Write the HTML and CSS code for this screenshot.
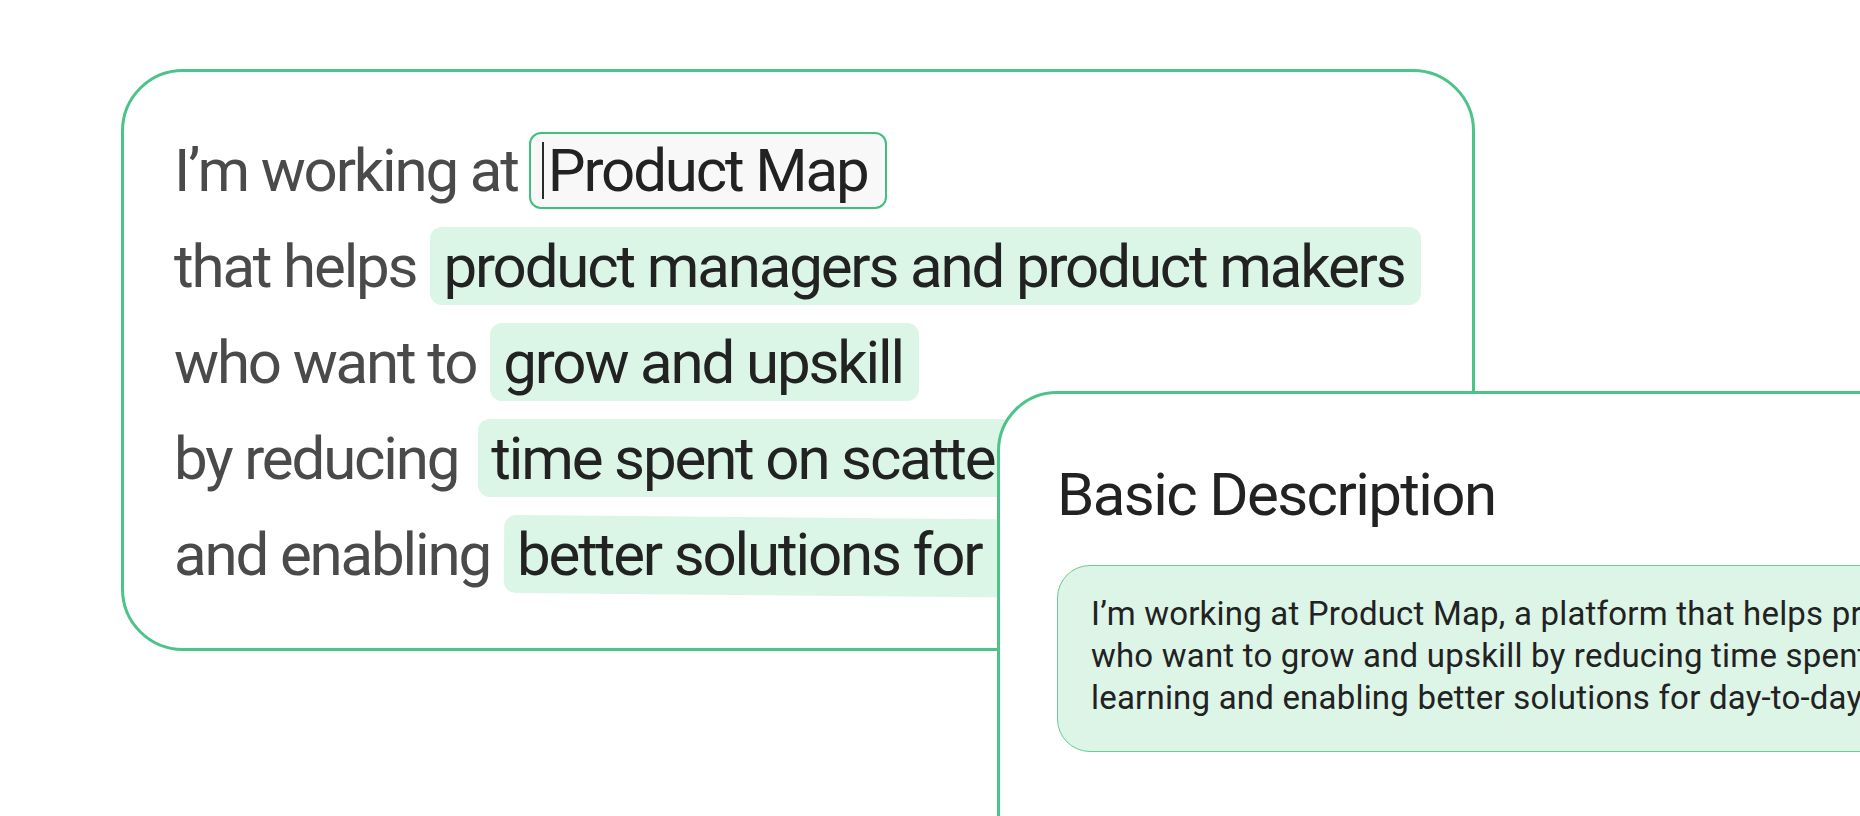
FILE: index.html
```html
<!DOCTYPE html>
<html>
<head>
    <title>Product Map - Describe your product</title>
    <link rel="stylesheet" href="styles.css">
</head>
<body>
    <div class="stage">
        <div class="builder">
            <div class="row">
                <span class="label">I’m working at</span>
                <span class="field"><span class="caret"></span>Product Map</span>
            </div>
            <div class="row">
                <span class="label">that helps</span>
                <span class="pill">product managers and product makers</span>
            </div>
            <div class="row">
                <span class="label">who want to</span>
                <span class="pill">grow and upskill</span>
            </div>
            <div class="row">
                <span class="label">by reducing</span>
                <span class="pill wide_gap">time spent on scattered learning</span>
            </div>
            <div class="row">
                <span class="label">and enabling</span>
                <span class="pill tilted">better solutions for day-to-day work</span>
            </div>
        </div>

        <div class="summary">
            <h2 class="summary_title">Basic Description</h2>
            <div class="summary_box">
                I’m working at Product Map, a platform that helps product managers and product makers<br>
                who want to grow and upskill by reducing time spent on scattered<br>
                learning and enabling better solutions for day-to-day challenges.
            </div>
        </div>
    </div>
</body>
</html>
```

FILE: styles.css
```css
body {
	margin: 0;
	background-color: #ffffff;
	font-family: Roboto, "Noto Sans", sans-serif;
	overflow: hidden;
}

.stage {
	position: relative;
	width: 1860px;
	height: 816px;
	overflow: hidden;
}

.builder {
	box-sizing: border-box;
	width: 1354px;
	height: 582px;
	margin: 69px 0 0 121px;
	padding: 59px 0 0 50px;
	border: 3px solid #4dc38a;
	border-radius: 62px;
	display: flex;
	flex-direction: column;
	gap: 18px;
}

.row {
	display: flex;
	align-items: center;
	gap: 14px;
	height: 78px;
	font-size: 60px;
	letter-spacing: -2.15px;
	white-space: nowrap;
}

.label {
	color: #4a4a4a;
}

.field {
	box-sizing: border-box;
	height: 77px;
	display: flex;
	align-items: center;
	margin-left: -3px;
	padding: 0 18px 0 11px;
	background-color: #f8f8f8;
	border: 2px solid #3fc07f;
	border-radius: 12px;
	color: #222222;
}

.caret {
	width: 2px;
	height: 57px;
	margin-right: 4px;
	background-color: #2a2a2a;
}

.pill {
	position: relative;
	isolation: isolate;
	height: 78px;
	display: flex;
	align-items: center;
	padding: 0 16px 0 13px;
	background-color: #dbf5e6;
	border-radius: 12px;
	color: #222222;
}

.pill.wide_gap {
	margin-left: 6px;
}

.pill.tilted {
	background-color: transparent;
}

.pill.tilted::before {
	content: "";
	position: absolute;
	inset: 0;
	z-index: -1;
	background-color: #dbf5e6;
	border-radius: 12px;
	transform: rotate(0.5deg);
	transform-origin: left center;
}

.summary {
	position: absolute;
	left: 997px;
	top: 391px;
	box-sizing: border-box;
	width: 1100px;
	height: 560px;
	padding: 65px 0 0 57px;
	background-color: #ffffff;
	border: 3px solid #4dc38a;
	border-radius: 60px;
}

.summary_title {
	margin: 0 0 34px 0;
	font-size: 60px;
	font-weight: 400;
	line-height: 72px;
	letter-spacing: -1.6px;
	color: #222222;
}

.summary_box {
	box-sizing: border-box;
	height: 187px;
	padding: 27px 0 0 33px;
	background-color: #dcf5e7;
	border: 1.5px solid #6acb96;
	border-radius: 33px;
	font-size: 33px;
	line-height: 42px;
	letter-spacing: 0.2px;
	color: #222222;
	white-space: nowrap;
}
```
